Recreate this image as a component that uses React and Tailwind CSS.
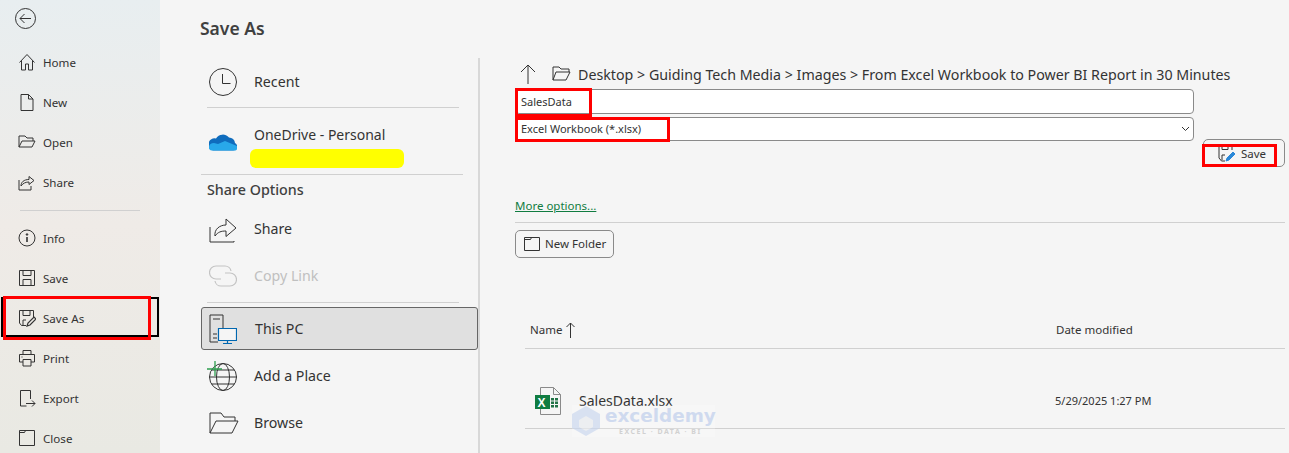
const S = { fill: "none", stroke: "#333", strokeWidth: 1 };

const Ic = ({ w = 18, h = 18, vb, children, className = "" }) => (
  <svg width={w} height={h} viewBox={vb || `0 0 ${w} ${h}`} className={"shrink-0 " + className} {...S}>{children}</svg>
);

const navIcons = {
  Home: <Ic w={18} h={18}><path d="M1.5 9.5 9 1.5l7.5 8M3.5 7.5v9.5h4v-6h3v6h4V7.5" /></Ic>,
  New: <Ic w={18} h={18}><path d="M3 1.5h7.5L15 6v11.5H3zM10.5 1.5V6H15" /></Ic>,
  Open: <Ic w={18} h={18}><path d="M1 14V3h6l2 2h6v3M1 14h13l3-6H4z" /></Ic>,
  Share: <Ic w={18} h={18}><path d="M1 7v10h12v-4M3 13c0-4 3-6.500 8-6.500V3.500l5 4-5 4V9c-3 0-6 1-8 4z" /></Ic>,
  Info: <Ic w={18} h={18}><circle cx="9" cy="9" r="8" /><path d="M9 8v5" strokeWidth="1.600" /><circle cx="9" cy="5.500" r=".8" fill="#333" /></Ic>,
  Save: <Ic w={18} h={18}><path d="M1.500 1.500h15v15h-15zM5 1.500v5h8v-5M5 16.500v-6h8v6" /></Ic>,
  "Save As": <Ic w={18} h={18}><path d="M8 16.500H3.500L1.500 14V1.500h14V8M5 1.500v5h7v-5M5 16v-5h3" /><path d="m9 17 1-3 6-6 2 2-6 6z" strokeWidth="1.200" /></Ic>,
  Print: <Ic w={18} h={18}><path d="M5 5V1.500h8V5M5 13H1.500V5.500h15V13H13M5 10.500h8v6.500H5z" /><path d="M3.500 8h1" /></Ic>,
  Export: <Ic w={18} h={18}><path d="M2.500 17V1.500h10V10M2.500 17h6" /><path d="M8 14.500h9m-3-3 3 3-3 3" /></Ic>,
  Close: <Ic w={18} h={18}><path d="M1.500 16.500v-15h15v15zM1.500 3.500h5l1-2" /></Ic>,
};

function NavItem({ label, boxed }) {
  return (
    <div className="relative flex h-10 shrink-0 items-center pl-[18px] text-[11.600px] text-[#333]">
      <span className="flex w-[25px]">{navIcons[label]}</span>
      <span className="mt-[1px]">{label}</span>
      {boxed && <span className="absolute left-[1px] right-[1px] top-[-1px] bottom-[1px] border-2 border-black" />}
      {boxed && <span className="absolute left-[3px] right-[9px] top-[-2px] bottom-[-2px] border-[3px] border-[#ff0000]" />}
    </div>
  );
}

function Place({ icon, label, muted, selected }) {
  return (
    <div className={`flex h-[43px] shrink-0 items-center rounded-[3px] pl-2 text-[14.200px] ${selected ? "border border-[#666] bg-[#e0e0e0]" : ""} ${muted ? "text-[#c0c0c0]" : "text-[#333]"}`}>
      <span className="flex w-[45px]">{icon}</span>
      <span className="mt-[1px]">{label}</span>
    </div>
  );
}

const Red = ({ className }) => <span className={"absolute border-[3px] border-[#ff0000] " + className} />;

export default function App() {
  return (
    <div className="flex h-[453px] w-[1289px] overflow-hidden bg-[#f5f5f5] font-['Noto_Sans','Open_Sans',sans-serif]">
      <aside className="flex h-full w-[160px] shrink-0 flex-col bg-gradient-to-b from-[#e8eef0] via-[#efebe7] to-[#e9e9e3]">
        <div className="flex h-[42px] shrink-0 items-start pl-[15px] pt-2">
          <Ic w={21} h={21}><circle cx="10.500" cy="10.500" r="10" /><path d="M16 10.500H5m4.500-4.500-4.500 4.500 4.500 4.500" /></Ic>
        </div>
        {["Home", "New", "Open", "Share"].map((l) => <NavItem key={l} label={l} />)}
        <div className="ml-5 mr-5 mb-[7px] mt-2 h-px shrink-0 bg-[#d0d0d0]" />
        {["Info", "Save"].map((l) => <NavItem key={l} label={l} />)}
        <NavItem label="Save As" boxed />
        {["Print", "Export", "Close"].map((l) => <NavItem key={l} label={l} />)}
      </aside>

      <section className="w-[320px] shrink-0 pl-[40px]">
        <h1 className="h-[58px] pt-[14px] text-[17.500px] font-semibold leading-[28px] text-[#404040]">Save As</h1>
        <div className="flex h-full w-[280px] flex-col border-r-2 border-[#d8d8d8] pl-[1px]">
          <div>
            <div className="flex h-[49px] items-center pb-[2px] pl-2 text-[14.200px] text-[#333]">
              <span className="flex w-[45px]">
                <Ic w={28} h={28}><circle cx="14" cy="14" r="13.500" /><path d="M13.500 6v9.500h8" /></Ic>
              </span>
              Recent
            </div>
            <div className="ml-[6px] mr-[19px] h-px bg-[#d0d0d0]" />
            <div className="relative flex h-[66px] items-center pl-2 text-[14px] text-[#333]">
              <span className="flex w-[45px]">
                <svg width="28" height="19" viewBox="0 0 28 19">
                  <path d="M4 18.500h20a4 4 0 0 0 2-7.500 6 6 0 0 0-6-5.500 8 8 0 0 0-13 1 6 6 0 0 0-3 12z" fill="#0f6cbd" />
                  <path d="M3 18.500a3 3 0 0 1-3-4c.500-2 2-3.500 5-3.500l4 1 7-3 12 5c1 2 0 5-3 4.500z" fill="#28a8ea" />
                </svg>
              </span>
              <span className="-mt-[14px]">OneDrive - Personal</span>
              <span className="absolute left-[49px] top-[41px] h-[19px] w-[154px] rounded-[6px] bg-[#ffff00]" />
            </div>
            <div className="mr-[15px] h-px bg-[#d0d0d0]" />
            <div className="flex h-[32px] items-center pb-[2px] pl-[6px] text-[14.300px] font-medium text-[#404040]">Share Options</div>
            <Place label="Share" icon={<Ic w={28} h={28}><path d="M1 12v15h24v-1M6 21c-1-7 5-11 11-11V4l10 9-10 8.500V16c-5 0-8 1-11 5z" /></Ic>} />
            <div className="mt-1">
              <Place label="Copy Link" muted icon={
                <svg width="28" height="22" viewBox="0 0 28 22" fill="none" stroke="#c4c4c4" strokeWidth="1.200">
                  <path d="M12 14H7a6 6 0 0 1 0-13h9a6 6 0 0 1 6 5" /><path d="M16 8h5a6 6 0 0 1 0 13h-9a6 6 0 0 1-6-5" />
                </svg>} />
            </div>
            <div className="ml-[6px] mr-[19px] mt-[5px] h-px bg-[#d0d0d0]" />
            <div className="mt-1">
              <Place label="This PC" selected icon={
                <svg width="28" height="30" viewBox="0 0 28 30" fill="none" stroke="#333" className="-ml-px">
                  <path d="M9 28H1V1h13v13M4 5h7M4 20h4M4 24h4" />
                  <path d="M9.500 14.500h18v12h-18z" fill="#f5f5f5" stroke="#0067b0" strokeWidth="1.200" />
                  <path d="M18.500 27v3M14 29.500h9" stroke="#0067b0" strokeWidth="1.200" />
                </svg>} />
            </div>
            <div className="mt-[4px]">
              <Place label="Add a Place" icon={
                <svg width="30" height="30" viewBox="0 0 30 30" fill="none" stroke="#333" className="-ml-[2px]">
                  <circle cx="16" cy="16" r="13.500" /><ellipse cx="16" cy="16" rx="6.500" ry="13.500" />
                  <path d="M2.500 16h27M4.500 9h23M4.500 23h23" />
                  <path d="M8 0v15M0 8h15" stroke="#2e9e4f" strokeWidth="1.300" />
                </svg>} />
            </div>
            <div className="mt-1">
              <Place label="Browse" icon={<Ic w={30} h={22}><path d="M1 21V1h11l3 4h11v4M1 21h22l6-12H7z" /></Ic>} />
            </div>
          </div>
        </div>
      </section>

      <main className="min-w-0 flex-1 pl-[35px] pr-[4px] text-[#333]">
        <div className="box-content flex h-[31px] items-center whitespace-nowrap pt-[58px] text-[14.240px] leading-[24px]">
          <span className="ml-[5px] flex w-[32px]">
            <Ic w={16} h={20}><path d="M8 20V1M1 8l7-7 7 7" /></Ic>
          </span>
          <span className="flex w-[26px]">
            <Ic w={19} h={15}><path d="M1 14V1h6l2 2h8v3M1 14h13l4-8H4z" /></Ic>
          </span>
          <span className="mt-[2px]">Desktop &gt; Guiding Tech Media &gt; Images &gt; From Excel Workbook to Power BI Report in 30 Minutes</span>
        </div>

        <div className="relative h-[25px] w-[679px] rounded-[4px] border border-[#8a8a8a] bg-white pl-[5px] text-[11px] leading-[23px]">
          SalesData
          <Red className="-left-[1px] top-[-2px] h-[29px] w-[77px]" />
        </div>
        <div className="relative mt-[3px] flex h-[24px] w-[679px] items-center justify-between rounded-[4px] border border-[#8a8a8a] bg-white pl-[5px] pr-[3px] text-[11px]">
          <span>Excel Workbook (*.xlsx)</span>
          <svg width="9" height="6" viewBox="0 0 9 6" fill="none" stroke="#333"><path d="m1 1 3.500 3.500L8 1" /></svg>
          <Red className="-left-[1px] top-[-1px] h-[25px] w-[155px]" />
        </div>

        <div className="-mt-[2px] flex justify-end">
          <div className="relative flex h-[28px] w-[82px] items-end justify-center gap-[5px] rounded-[5px] border border-[#8a8a8a] pb-[4px] pr-[4px] text-[11.500px]">
            <svg width="18" height="18" viewBox="0 0 18 18" fill="none" stroke="#333">
              <path d="M7 17H3.500L1 14V1.500h13V6M4 1.500v4h6v-4M4 16v-5h3" />
              <path d="m8 17 1-3 6-6 2 2-6 6z" fill="#2b88d8" stroke="#2b88d8" />
            </svg>
            <span>Save</span>
            <Red className="-left-[2px] top-[4px] h-[23px] w-[75px]" />
          </div>
        </div>

        <a className="mt-[30px] block text-[11.500px] leading-[17px] text-[#107c41] underline">More options...</a>
        <div className="mt-[8px] h-px bg-[#d0d0d0]" />
        <div className="mt-[7px] flex h-[28px] w-[99px] items-center gap-[5px] rounded-[5px] border border-[#8a8a8a] pl-2 text-[11.500px]">
          <Ic w={16} h={14}><path d="M.500 13.500V.500h15v13zM.500 2.500h6l1-2" /></Ic>
          New Folder
        </div>

        <div className="ml-[10px] mt-[58px] flex h-[33px] items-center border-b border-[#d0d0d0] pb-[4px] text-[11.500px]">
          <div className="flex w-[531px] items-center gap-[4px] pl-[5px]">
            Name
            <Ic w={9} h={16}><path d="M4.500 16V1M.500 5l4-4 4 4" /></Ic>
          </div>
          <div>Date modified</div>
        </div>

        <div className="relative ml-[10px] flex h-[80px] items-center border-b border-[#d0d0d0] pt-[24px]">
          <div className="flex w-[530px] items-center pl-[10px] text-[14px]">
            <svg width="26" height="28" viewBox="0 0 26 28" className="mr-[18px] shrink-0">
              <path d="M5.500.500h13l7 7v20h-20z" fill="#f5f5f5" stroke="#8a8a8a" />
              <path d="M18.500.500v7h7" fill="none" stroke="#8a8a8a" />
              <path d="M16 11h3v2.500h-3zM20 11h3v2.500h-3zM16 14.500h3V17h-3zM20 14.500h3V17h-3zM16 18h3v2.500h-3zM20 18h3v2.500h-3z" fill="#217346" />
              <rect x="0" y="8" width="15" height="14" fill="#107c41" />
              <text x="2.500" y="19.500" fontSize="12" fontWeight="700" fill="#fff" fontFamily="Liberation Sans, sans-serif">X</text>
            </svg>
            SalesData.xlsx
          </div>
          <div className="mt-[1px] text-[11px]">5/29/2025 1:27 PM</div>
          <div className="absolute left-[47px] top-[56px] flex h-[32px] w-[143px] items-center bg-white/20">
            <svg width="28" height="30" viewBox="0 0 28 30" className="mr-[5px] shrink-0 opacity-60">
              <path d="M14 0 28 8v14L14 30 0 22V8z" fill="#c4d3ee" />
              <path d="M14 10 21 14v7l-7 4-7-4v-7z" fill="#e6e9ee" />
            </svg>
            <div className="flex flex-col items-center leading-none opacity-60">
              <span className="font-['DejaVu_Sans',sans-serif] text-[18.400px] font-bold leading-[18px] text-[#b6c7ea]">exceldemy</span>
              <span className="mt-[3px] text-[7px] font-bold tracking-[1.500px] text-[#b9b9b9]">EXCEL · DATA · BI</span>
            </div>
          </div>
        </div>
      </main>
    </div>
  );
}
